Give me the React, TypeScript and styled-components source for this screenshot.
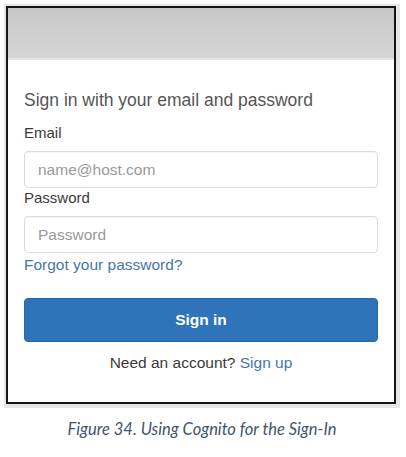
import React from "react";
import styled, { createGlobalStyle } from "styled-components";

const GlobalStyle = createGlobalStyle`
  html, body {
    margin: 0;
    padding: 0;
    background: #ffffff;
  }
  body {
    font-family: "Liberation Sans", Arial, sans-serif;
  }
`;

const Page = styled.div`
  width: 406px;
  height: 457px;
  padding: 4px 0 0 4px;
  box-sizing: border-box;
  display: flex;
  flex-direction: column;
`;

const Shadow = styled.div`
  width: 396px;
  box-sizing: border-box;
  padding: 2px 4px 4px 2px;
  background: #e6e6e6;
`;

const Card = styled.div`
  border: 2px solid #151515;
  background: #ffffff;
  height: 398px;
  box-sizing: border-box;
  display: flex;
  flex-direction: column;
`;

const Banner = styled.div`
  height: 50px;
  background: linear-gradient(#c8c8c8, #d5d5d5);
  border-bottom: 2px solid #e4e4e4;
`;

const Form = styled.form`
  display: flex;
  flex-direction: column;
  padding: 30px 16px 0 16px;
`;

const Heading = styled.h2`
  margin: 0;
  font-size: 17.5px;
  line-height: 20px;
  font-weight: normal;
  color: #555555;
`;

const Label = styled.label<{ $top: number }>`
  display: block;
  margin-top: ${({ $top }) => $top}px;
  font-size: 15px;
  line-height: 18px;
  color: #3a3a3a;
`;

const Input = styled.input`
  margin-top: 9px;
  height: 37px;
  box-sizing: border-box;
  border: 1px solid #dcdcdc;
  border-radius: 4px;
  box-shadow: inset 0 1px 1px rgba(0, 0, 0, 0.04);
  padding: 0 13px;
  font-family: "Liberation Sans", Arial, sans-serif;
  font-size: 15.5px;
  color: #333;
  outline: none;

  &::placeholder {
    color: #9a9a9a;
  }
`;

const Link = styled.a`
  color: #4677a8;
  text-decoration: none;
  cursor: pointer;
`;

const Forgot = styled(Link)`
  display: block;
  margin-top: 3px;
  font-size: 15.5px;
  line-height: 18px;
`;

const Button = styled.button`
  margin-top: 24px;
  height: 44px;
  border: 1px solid #2a67a3;
  border-radius: 4px;
  background: #2f74b9;
  color: #ffffff;
  font-family: "Liberation Sans", Arial, sans-serif;
  font-size: 15.5px;
  font-weight: bold;
  cursor: pointer;
`;

const Footer = styled.p`
  margin: 12px 0 0;
  text-align: center;
  font-size: 15.5px;
  line-height: 18px;
  color: #3a3a3a;
`;

const Caption = styled.p`
  margin: 11px 0 0;
  width: 396px;
  text-align: center;
  font-family: Lato, "Open Sans", sans-serif;
  font-style: italic;
  font-size: 16.5px;
  line-height: 20px;
  color: #44546a;
`;

export default function App() {
  return (
    <Page>
      <GlobalStyle />
      <Shadow>
        <Card>
          <Banner />
          <Form onSubmit={(e) => e.preventDefault()}>
            <Heading>Sign in with your email and password</Heading>
            <Label $top={14} htmlFor="email">
              Email
            </Label>
            <Input id="email" type="text" placeholder="name@host.com" />
            <Label $top={1} htmlFor="password">
              Password
            </Label>
            <Input id="password" type="password" placeholder="Password" />
            <Forgot>Forgot your password?</Forgot>
            <Button type="submit">Sign in</Button>
            <Footer>
              Need an account? <Link>Sign up</Link>
            </Footer>
          </Form>
        </Card>
      </Shadow>
      <Caption>Figure 34. Using Cognito for the Sign-In</Caption>
    </Page>
  );
}
